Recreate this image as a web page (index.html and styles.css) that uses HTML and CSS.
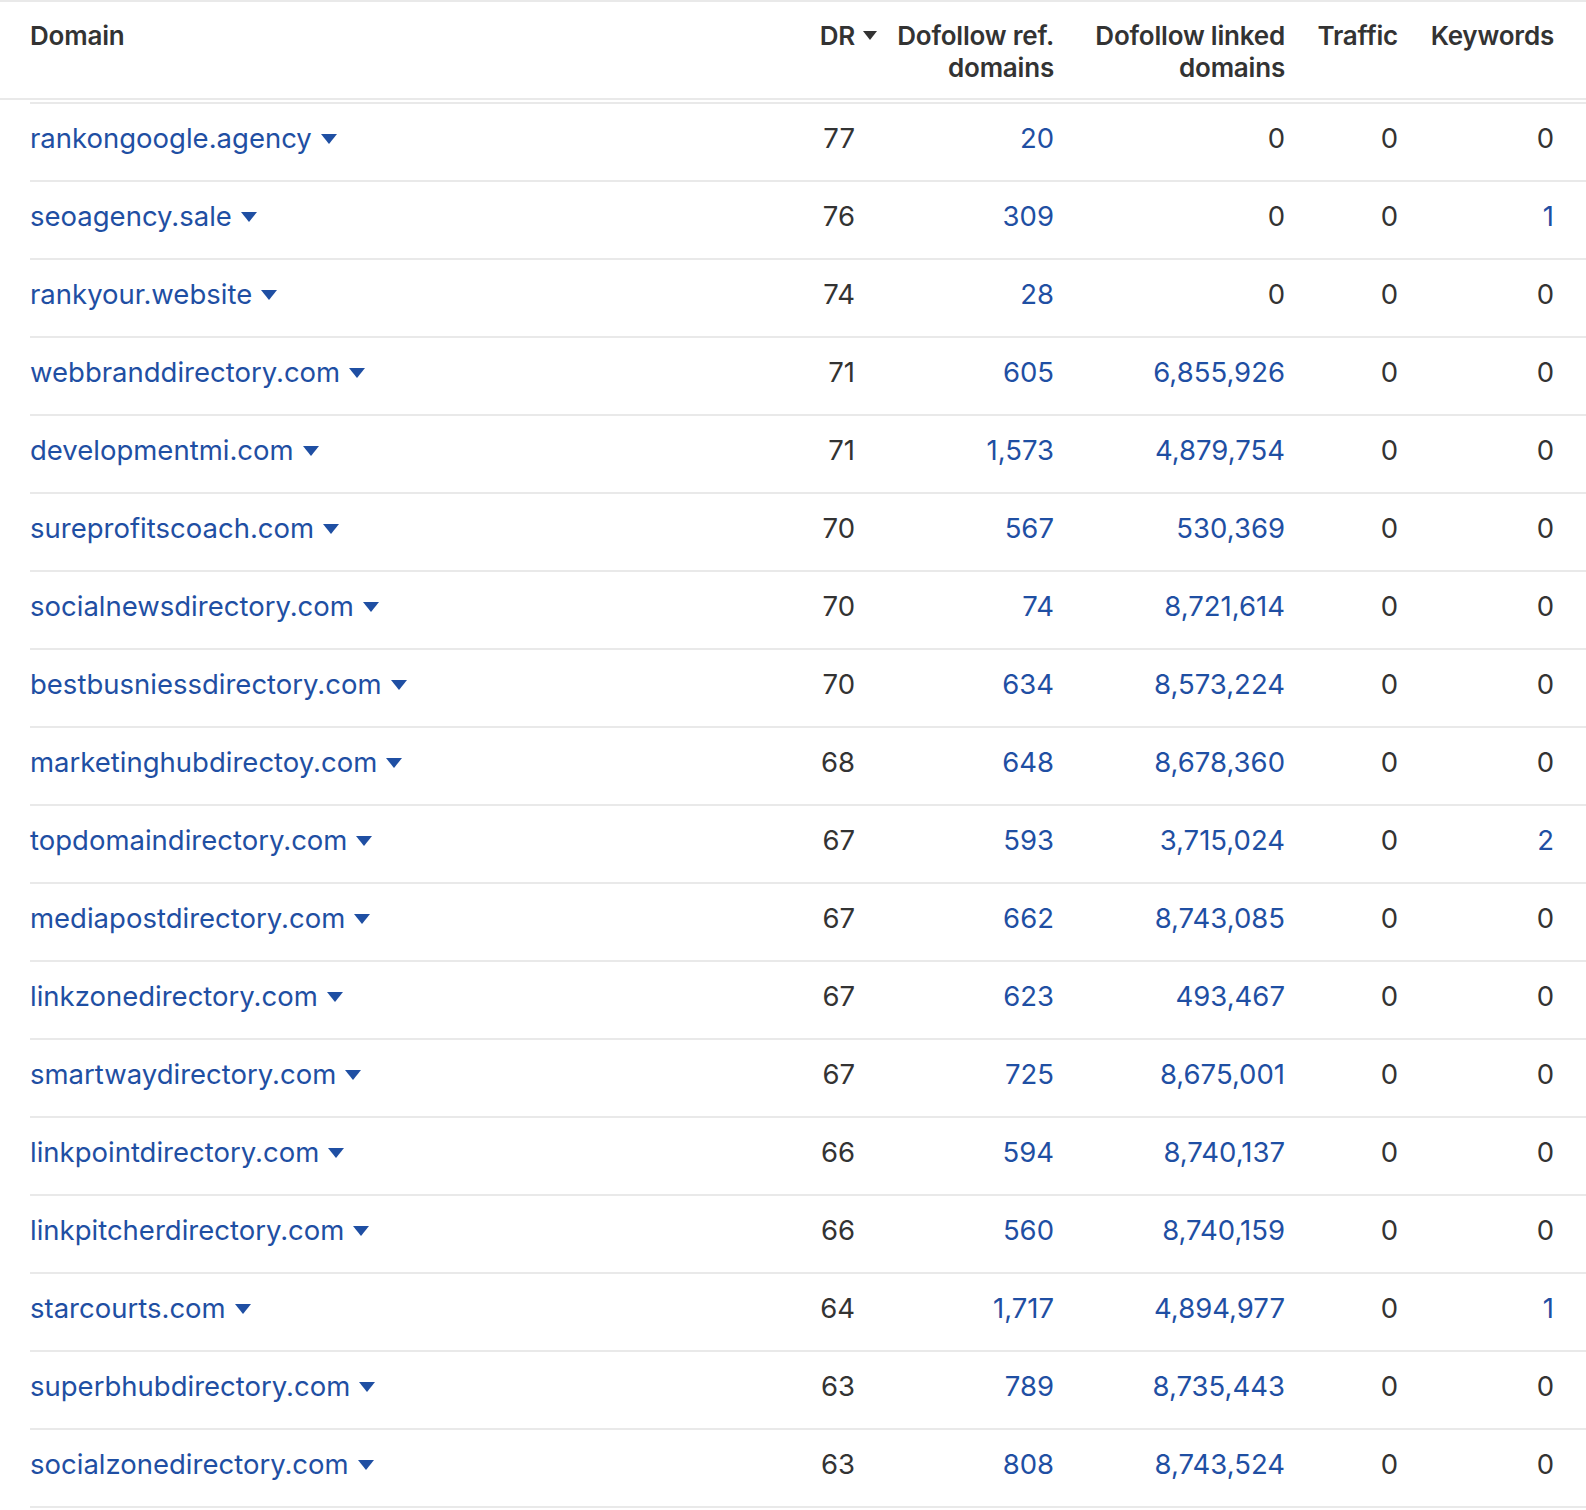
FILE: index.html
```html
<!DOCTYPE html>
<html>
<head>
<meta charset="utf-8">
<link rel="stylesheet" href="styles.css">
</head>
<body>
<div class="table">
  <div class="head">
    <div class="hc left">Domain</div>
    <div class="hc dr-h">DR<svg class="sort" width="14" height="9" viewBox="0 0 14 9"><path d="M0 0h14L7 9z"/></svg></div>
    <div class="hc">Dofollow ref.<br>domains</div>
    <div class="hc">Dofollow linked<br>domains</div>
    <div class="hc">Traffic</div>
    <div class="hc">Keywords</div>
  </div>
  <div class="body">
    <div class="row"><div class="c dom"><span>rankongoogle.agency</span><svg class="tri" width="16" height="10" viewBox="0 0 16 10"><path d="M0 0h16L8 10z"/></svg></div><div class="c dr">77</div><div class="c link">20</div><div class="c">0</div><div class="c">0</div><div class="c">0</div></div>
    <div class="row"><div class="c dom"><span>seoagency.sale</span><svg class="tri" width="16" height="10" viewBox="0 0 16 10"><path d="M0 0h16L8 10z"/></svg></div><div class="c dr">76</div><div class="c link">309</div><div class="c">0</div><div class="c">0</div><div class="c link">1</div></div>
    <div class="row"><div class="c dom"><span>rankyour.website</span><svg class="tri" width="16" height="10" viewBox="0 0 16 10"><path d="M0 0h16L8 10z"/></svg></div><div class="c dr">74</div><div class="c link">28</div><div class="c">0</div><div class="c">0</div><div class="c">0</div></div>
    <div class="row"><div class="c dom"><span>webbranddirectory.com</span><svg class="tri" width="16" height="10" viewBox="0 0 16 10"><path d="M0 0h16L8 10z"/></svg></div><div class="c dr">71</div><div class="c link">605</div><div class="c link">6,855,926</div><div class="c">0</div><div class="c">0</div></div>
    <div class="row"><div class="c dom"><span>developmentmi.com</span><svg class="tri" width="16" height="10" viewBox="0 0 16 10"><path d="M0 0h16L8 10z"/></svg></div><div class="c dr">71</div><div class="c link">1,573</div><div class="c link">4,879,754</div><div class="c">0</div><div class="c">0</div></div>
    <div class="row"><div class="c dom"><span>sureprofitscoach.com</span><svg class="tri" width="16" height="10" viewBox="0 0 16 10"><path d="M0 0h16L8 10z"/></svg></div><div class="c dr">70</div><div class="c link">567</div><div class="c link">530,369</div><div class="c">0</div><div class="c">0</div></div>
    <div class="row"><div class="c dom"><span>socialnewsdirectory.com</span><svg class="tri" width="16" height="10" viewBox="0 0 16 10"><path d="M0 0h16L8 10z"/></svg></div><div class="c dr">70</div><div class="c link">74</div><div class="c link">8,721,614</div><div class="c">0</div><div class="c">0</div></div>
    <div class="row"><div class="c dom"><span>bestbusniessdirectory.com</span><svg class="tri" width="16" height="10" viewBox="0 0 16 10"><path d="M0 0h16L8 10z"/></svg></div><div class="c dr">70</div><div class="c link">634</div><div class="c link">8,573,224</div><div class="c">0</div><div class="c">0</div></div>
    <div class="row"><div class="c dom"><span>marketinghubdirectoy.com</span><svg class="tri" width="16" height="10" viewBox="0 0 16 10"><path d="M0 0h16L8 10z"/></svg></div><div class="c dr">68</div><div class="c link">648</div><div class="c link">8,678,360</div><div class="c">0</div><div class="c">0</div></div>
    <div class="row"><div class="c dom"><span>topdomaindirectory.com</span><svg class="tri" width="16" height="10" viewBox="0 0 16 10"><path d="M0 0h16L8 10z"/></svg></div><div class="c dr">67</div><div class="c link">593</div><div class="c link">3,715,024</div><div class="c">0</div><div class="c link">2</div></div>
    <div class="row"><div class="c dom"><span>mediapostdirectory.com</span><svg class="tri" width="16" height="10" viewBox="0 0 16 10"><path d="M0 0h16L8 10z"/></svg></div><div class="c dr">67</div><div class="c link">662</div><div class="c link">8,743,085</div><div class="c">0</div><div class="c">0</div></div>
    <div class="row"><div class="c dom"><span>linkzonedirectory.com</span><svg class="tri" width="16" height="10" viewBox="0 0 16 10"><path d="M0 0h16L8 10z"/></svg></div><div class="c dr">67</div><div class="c link">623</div><div class="c link">493,467</div><div class="c">0</div><div class="c">0</div></div>
    <div class="row"><div class="c dom"><span>smartwaydirectory.com</span><svg class="tri" width="16" height="10" viewBox="0 0 16 10"><path d="M0 0h16L8 10z"/></svg></div><div class="c dr">67</div><div class="c link">725</div><div class="c link">8,675,001</div><div class="c">0</div><div class="c">0</div></div>
    <div class="row"><div class="c dom"><span>linkpointdirectory.com</span><svg class="tri" width="16" height="10" viewBox="0 0 16 10"><path d="M0 0h16L8 10z"/></svg></div><div class="c dr">66</div><div class="c link">594</div><div class="c link">8,740,137</div><div class="c">0</div><div class="c">0</div></div>
    <div class="row"><div class="c dom"><span>linkpitcherdirectory.com</span><svg class="tri" width="16" height="10" viewBox="0 0 16 10"><path d="M0 0h16L8 10z"/></svg></div><div class="c dr">66</div><div class="c link">560</div><div class="c link">8,740,159</div><div class="c">0</div><div class="c">0</div></div>
    <div class="row"><div class="c dom"><span>starcourts.com</span><svg class="tri" width="16" height="10" viewBox="0 0 16 10"><path d="M0 0h16L8 10z"/></svg></div><div class="c dr">64</div><div class="c link">1,717</div><div class="c link">4,894,977</div><div class="c">0</div><div class="c link">1</div></div>
    <div class="row"><div class="c dom"><span>superbhubdirectory.com</span><svg class="tri" width="16" height="10" viewBox="0 0 16 10"><path d="M0 0h16L8 10z"/></svg></div><div class="c dr">63</div><div class="c link">789</div><div class="c link">8,735,443</div><div class="c">0</div><div class="c">0</div></div>
    <div class="row"><div class="c dom"><span>socialzonedirectory.com</span><svg class="tri" width="16" height="10" viewBox="0 0 16 10"><path d="M0 0h16L8 10z"/></svg></div><div class="c dr">63</div><div class="c link">808</div><div class="c link">8,743,524</div><div class="c">0</div><div class="c">0</div></div>
  </div>
</div>
</body>
</html>
```

FILE: styles.css
```css
html, body {
  margin: 0;
  padding: 0;
  background: #fff;
}
body {
  font-family: Inter, "Noto Sans", "Liberation Sans", sans-serif;
  color: #333;
  font-size: 27.5px;
}
.table {
  width: 1586px;
  border-top: 2px solid #e9e9e9;
}
.head,
.row {
  display: grid;
  grid-template-columns: 1fr 77px 177px 231px 113px 156px;
  padding-right: 32px;
}
.head {
  padding-left: 30px;
  padding-top: 18px;
  height: 78px;
  border-bottom: 2px solid #e9e9e9;
  font-size: 26px;
  font-weight: 600;
  line-height: 32px;
  letter-spacing: -0.2px;
}
.hc {
  text-align: right;
}
.hc.left {
  text-align: left;
}
.dr-h {
  display: flex;
  justify-content: flex-end;
  align-items: center;
  align-self: start;
  height: 32px;
  gap: 8px;
}
.sort {
  fill: #333;
  margin-top: -1px;
}
.body {
  margin-left: 30px;
  margin-top: 2px;
  border-top: 2px solid #e9e9e9;
}
.row {
  box-sizing: border-box;
  height: 78px;
  padding-bottom: 8px;
  border-bottom: 2px solid #e9e9e9;
  align-items: center;
}
.c {
  text-align: right;
}
.dr {
  padding-right: 22px;
}
.link {
  color: #1f4fa3;
}
.dom {
  text-align: left;
  color: #1f4fa3;
  display: flex;
  align-items: center;
  gap: 9px;
}
.tri {
  fill: #1f4fa3;
  margin-top: 2px;
}
```
